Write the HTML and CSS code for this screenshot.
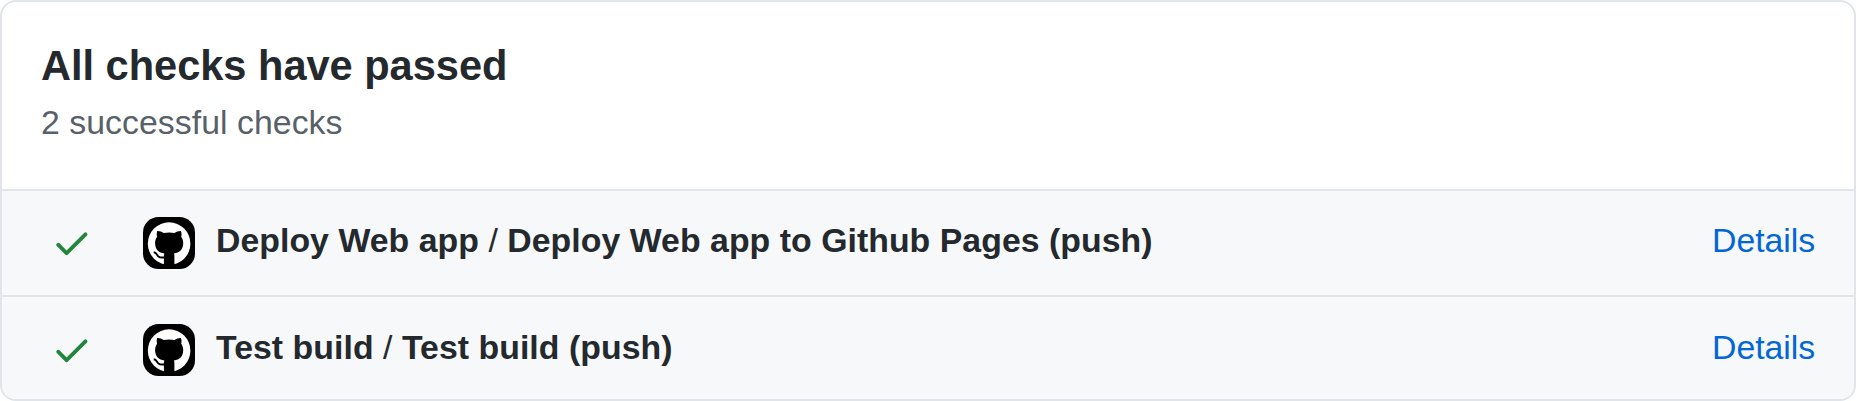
FILE: index.html
```html
<!DOCTYPE html>
<html lang="en">
<head>
<meta charset="utf-8">
<title>All checks have passed</title>
<link rel="stylesheet" href="styles.css">
</head>
<body>
<svg width="0" height="0" class="symbols" aria-hidden="true">
  <symbol id="check" viewBox="0 0 16 16"><path fill-rule="evenodd" d="M13.78 4.22a.75.75 0 010 1.06l-7.25 7.25a.75.75 0 01-1.06 0L2.22 9.28a.75.75 0 011.06-1.06L6 10.94l6.72-6.72a.75.75 0 011.06 0z"/></symbol>
  <symbol id="mark" viewBox="0 0 52 52">
    <circle cx="26.1" cy="26.6" r="21.3" fill="#fff"/>
    <path d="M14.3 14c2.1-.2 4.400.8 6.500 2.100 3.400-.7 7.200-.7 10.600 0 2.100-1.300 4.400-2.300 6.500-2.100.8 1.900.8 4 .3 5.700 1.400 1.800 2 3.900 2 6.200 0 6.600-3.600 9.600-9.300 10.500.4.700.5 1.600.5 2.700V50H20.900V39.100c0-1.100.1-2 .5-2.700-5.700-.9-9.300-3.900-9.300-10.500 0-2.300.6-4.400 2-6.200-.5-1.700-.6-3.800.2-5.700z" fill="#000"/>
    <path d="M10.700 35.200c3 .3 3 2.700 4.700 4.200 1.500 1.200 3.700 1.300 6.500.8" fill="none" stroke="#000" stroke-width="1.900"/>
  </symbol>
</svg>
<main class="card">
  <header class="card-header">
    <h1 class="title">All checks have passed</h1>
    <p class="subtitle">2 successful checks</p>
  </header>
  <section class="check-row">
    <svg class="check-icon"><use href="#check"/></svg>
    <span class="avatar"><svg class="mark"><use href="#mark"/></svg></span>
    <strong class="name">Deploy Web app <span class="slash">/</span> Deploy Web app to Github Pages (push)</strong>
    <a class="details">Details</a>
  </section>
  <section class="check-row check-row-last">
    <svg class="check-icon"><use href="#check"/></svg>
    <span class="avatar"><svg class="mark"><use href="#mark"/></svg></span>
    <strong class="name">Test build <span class="slash">/</span> Test build (push)</strong>
    <a class="details">Details</a>
  </section>
</main>
</body>
</html>
```
FILE: styles.css
```css
* { box-sizing: border-box; }
body {
  margin: 0;
  background: #fff;
  color: #24292e;
  font: 33.8px/52px "Liberation Sans", Arial, sans-serif;
}
.symbols { display: none; }
.card {
  width: 1856px;
  height: 401px;
  border: 2px solid #e1e4e8;
  border-radius: 16px;
  overflow: hidden;
}
.card-header { height: 187px; padding: 36px 39px 0; }
.title { margin: 0; font-size: 41.6px; line-height: 56px; font-weight: 700; letter-spacing: -.03px; }
.subtitle { margin: 2px 0 0; color: #586069; letter-spacing: .05px; }
.check-row {
  display: flex;
  align-items: flex-start;
  height: 106px;
  padding: 26px 39px 0 49px;
  border-top: 2px solid #e1e4e8;
  background: #f6f8fa;
}
.check-row-last { padding-top: 27px; }
.check-icon { width: 41.6px; height: 41.6px; margin-top: 4.5px; fill: #22863a; }
.avatar {
  width: 52px;
  height: 52px;
  margin: 0 21px 0 50.4px;
  border-radius: 15.6px;
  background: #000;
}
.mark { display: block; width: 52px; height: 52px; }
.name { flex: 1; margin-top: -3px; font-weight: 700; letter-spacing: .05px; }
.slash { font-weight: 400; }
.details { margin-top: -3px; color: #0366d6; letter-spacing: -.05px; }
```
